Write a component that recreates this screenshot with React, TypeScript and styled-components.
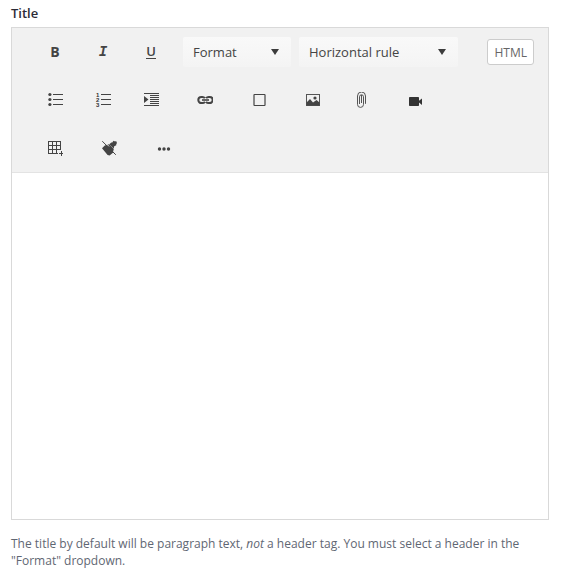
import React from 'react';
import styled, { createGlobalStyle } from 'styled-components';

const GlobalStyle = createGlobalStyle`
  *, *::before, *::after { box-sizing: border-box; }
  body {
    margin: 0;
    background: #fff;
    font-family: "Open Sans", "Noto Sans", sans-serif;
    font-size: 13px;
    color: #333;
  }
`;

const Field = styled.div`
  display: flex;
  flex-direction: column;
  padding: 4px 19px 12px 11px;
`;

const Label = styled.label`
  font-size: 13px;
  font-weight: 600;
  line-height: 18px;
  margin-bottom: 5px;
  color: #2b2b36;
`;

const Editor = styled.div`
  display: flex;
  flex-direction: column;
  border: 1px solid #d9d9d9;
`;

const Toolbar = styled.div`
  display: flex;
  flex-direction: column;
  padding: 0 14px 0 19px;
  background: #f1f1f1;
  border-bottom: 1px solid #e3e3e3;
`;

const ToolRow = styled.div<{ $gap: number }>`
  display: flex;
  align-items: center;
  gap: ${(p) => p.$gap}px;
  height: 48px;
`;

const Group = styled.div`
  display: flex;
`;

const ToolButton = styled.button`
  display: flex;
  align-items: center;
  justify-content: center;
  width: 48px;
  height: 48px;
  padding: 0;
  border: 0;
  background: transparent;
  color: #444;
  cursor: pointer;
`;

const Icon = styled.svg.attrs({ width: 16, height: 16, viewBox: '0 0 16 16', 'aria-hidden': true })`
  display: block;
  fill: none;
  stroke: none;
`;

const BoldLetter = styled.span`
  font: 700 14px/18px "Open Sans", sans-serif;
`;

const ItalicLetter = styled.span`
  font: italic 700 14px/18px "Liberation Mono", monospace;
`;

const UnderlineLetter = styled.span`
  font: 600 13px/13px "Open Sans", sans-serif;
  border-bottom: 1px solid #444;
`;

const SelectBox = styled.div<{ $width: number }>`
  position: relative;
  flex: 0 1 ${(p) => p.$width}px;
  min-width: 0;
`;

const Select = styled.select`
  appearance: none;
  width: 100%;
  height: 30px;
  padding: 0 28px 0 10px;
  border: 0;
  border-radius: 2px;
  background: linear-gradient(#f9f9f9, #f4f4f4);
  font: inherit;
  color: #444;
  cursor: pointer;
`;

const Arrow = styled.svg.attrs({ width: 8, height: 6, viewBox: '0 0 8 6', 'aria-hidden': true })`
  position: absolute;
  top: 12px;
  right: 12px;
  fill: #3c3c3c;
  pointer-events: none;
`;

const HtmlButton = styled.button`
  height: 26px;
  margin-left: auto;
  padding: 0 6px;
  border: 1px solid #ccc;
  border-radius: 3px;
  background: #fff;
  font: inherit;
  font-size: 12px;
  color: #666;
  cursor: pointer;
`;

const Content = styled.textarea`
  display: block;
  width: 100%;
  height: 346px;
  padding: 12px 20px;
  border: 0;
  outline: 0;
  resize: none;
  background: #fff;
  font: inherit;
`;

const Help = styled.p`
  margin: 15px 0 0;
  font-size: 12px;
  line-height: 17px;
  color: #5f6773;
`;

const Digits = styled.text`
  font: 700 6px "Liberation Sans", sans-serif;
  fill: #333;
`;

const BulletIcon = () => (
  <Icon>
    <g fill="#444">
      <circle cx="2.9" cy="2.5" r="1.6" />
      <circle cx="2.9" cy="7.5" r="1.6" />
      <circle cx="2.9" cy="12.5" r="1.6" />
      <path d="M6 2h10v1H6zM6 7h10v1H6zM6 12h10v1H6z" />
    </g>
  </Icon>
);

const NumberIcon = () => (
  <Icon>
    <Digits x="1" y="5">1</Digits>
    <Digits x="1" y="10">2</Digits>
    <Digits x="1" y="15">3</Digits>
    <path fill="#444" d="M6 2h10v1H6zM6 7h10v1H6zM6 12h10v1H6z" />
  </Icon>
);

const IndentIcon = () => (
  <Icon>
    <path
      fill="#444"
      d="M1 1h15v1H1zM7 3h9v1H7zM7 5h9v1H7zM7 7h9v1H7zM7 9h9v1H7zM7 11h9v1H7zM1 13h15v1H1zM1 4l4.5 3.5L1 11z"
    />
  </Icon>
);

const LinkIcon = () => (
  <Icon>
    <path
      d="M7.9 6.2A3.2 3.2 0 0 0 5.2 4.9H4.4a3.1 3.1 0 0 0 0 6.2h.8a3.2 3.2 0 0 0 2.7-1.3M9.1 6.2A3.2 3.2 0 0 1 11.8 4.9h.8a3.1 3.1 0 0 1 0 6.2h-.8a3.2 3.2 0 0 1-2.7-1.3"
      stroke="#444"
      strokeWidth="2"
    />
    <path d="M5 8h7" stroke="#444" strokeWidth="1.6" />
  </Icon>
);

const SquareIcon = () => (
  <Icon>
    <rect x="3" y="2.5" width="11" height="11" rx="0.5" stroke="#444" strokeWidth="1.2" />
  </Icon>
);

const ImageIcon = () => (
  <Icon>
    <rect x="1.5" y="2.5" width="13" height="11" stroke="#555" />
    <path fill="#444" d="M1.5 13.5v-3L5 7l3 3.5L11.5 8l3 2.5v3z" />
    <circle cx="10" cy="6" r="1.6" fill="#444" />
  </Icon>
);

const ClipIcon = () => (
  <Icon>
    <path
      d="M12.5 11.8V4a3.8 3.8 0 0 0-8 0v8.4a3 3 0 0 0 6 0V4.8a1.9 1.9 0 0 0-4 0V12M8.5 3v8"
      stroke="#555"
      strokeWidth="1"
    />
  </Icon>
);

const VideoIcon = () => (
  <Icon>
    <rect x="2" y="5" width="10" height="9" rx="0.7" fill="#333" />
    <path fill="#333" d="M12 8.8 15 6.5v6.5L12 10.5z" />
  </Icon>
);

const TableIcon = () => (
  <Icon>
    <path d="M1.5 1v13M5.5 1v13M9.5 1v13M13.5 1v9M1 1.5h13M1 5.5h13M1 9.5h13M1 13.5h10M14.5 11v5M12 13.5h5" stroke="#444" />
  </Icon>
);

const ClearIcon = () => (
  <Icon>
    <path
      fill="#444"
      d="M1 8.2 3.8 5.6 5.2 5 8 4.2 12.8 9l-.7 2.4.1 1.2L8.6 15.4 6.6 15zM8.3 4.2l2-1.8 1 .2 1.2-1.9 1.6.8 1-.4.9 1.8-.8 1.3.1 1.1-2.1.9-.4 2.4z"
    />
    <path d="M1.3 1.2 14.8 14.8" stroke="#444" />
    <path d="M2.8 1.2 8 6.4" stroke="#f1f1f1" />
  </Icon>
);

const MoreIcon = () => (
  <Icon>
    <g fill="#444">
      <circle cx="4.5" cy="9" r="1.7" />
      <circle cx="9" cy="9" r="1.7" />
      <circle cx="13.5" cy="9" r="1.7" />
    </g>
  </Icon>
);

type Tool = { label: string; icon: React.ReactElement };

const styleTools: Tool[] = [
  { label: 'Bold', icon: <BoldLetter>B</BoldLetter> },
  { label: 'Italic', icon: <ItalicLetter>I</ItalicLetter> },
  { label: 'Underline', icon: <UnderlineLetter>U</UnderlineLetter> },
];

const insertTools: Tool[][] = [
  [
    { label: 'Bulleted list', icon: <BulletIcon /> },
    { label: 'Numbered list', icon: <NumberIcon /> },
    { label: 'Indent', icon: <IndentIcon /> },
  ],
  [{ label: 'Link', icon: <LinkIcon /> }],
  [{ label: 'Button', icon: <SquareIcon /> }],
  [
    { label: 'Image', icon: <ImageIcon /> },
    { label: 'Attach file', icon: <ClipIcon /> },
  ],
  [{ label: 'Video', icon: <VideoIcon /> }],
];

const extraTools: Tool[][] = [
  [{ label: 'Table', icon: <TableIcon /> }],
  [{ label: 'Clear formatting', icon: <ClearIcon /> }],
  [{ label: 'More', icon: <MoreIcon /> }],
];

const ToolGroup = ({ tools }: { tools: Tool[] }) => (
  <Group>
    {tools.map((tool) => (
      <ToolButton key={tool.label} type="button" aria-label={tool.label}>
        {tool.icon}
      </ToolButton>
    ))}
  </Group>
);

const Dropdown = ({ label, width }: { label: string; width: number }) => (
  <SelectBox $width={width}>
    <Select aria-label={label}>
      <option>{label}</option>
    </Select>
    <Arrow>
      <path d="M0 0h8L4 6z" />
    </Arrow>
  </SelectBox>
);

export default function App() {
  return (
    <>
      <GlobalStyle />
      <Field>
        <Label htmlFor="title">Title</Label>
        <Editor>
          <Toolbar role="toolbar" aria-label="Formatting">
            <ToolRow $gap={8}>
              <ToolGroup tools={styleTools} />
              <Dropdown label="Format" width={108} />
              <Dropdown label="Horizontal rule" width={159} />
              <HtmlButton type="button">HTML</HtmlButton>
            </ToolRow>
            {[insertTools, extraTools].map((row, i) => (
              <ToolRow key={i} $gap={6}>
                {row.map((tools) => (
                  <ToolGroup key={tools[0].label} tools={tools} />
                ))}
              </ToolRow>
            ))}
          </Toolbar>
          <Content id="title" aria-describedby="title-help" />
        </Editor>
        <Help id="title-help">
          The title by default will be paragraph text, <em>not</em> a header tag. You must select a header in the
          "Format" dropdown.
        </Help>
      </Field>
    </>
  );
}
